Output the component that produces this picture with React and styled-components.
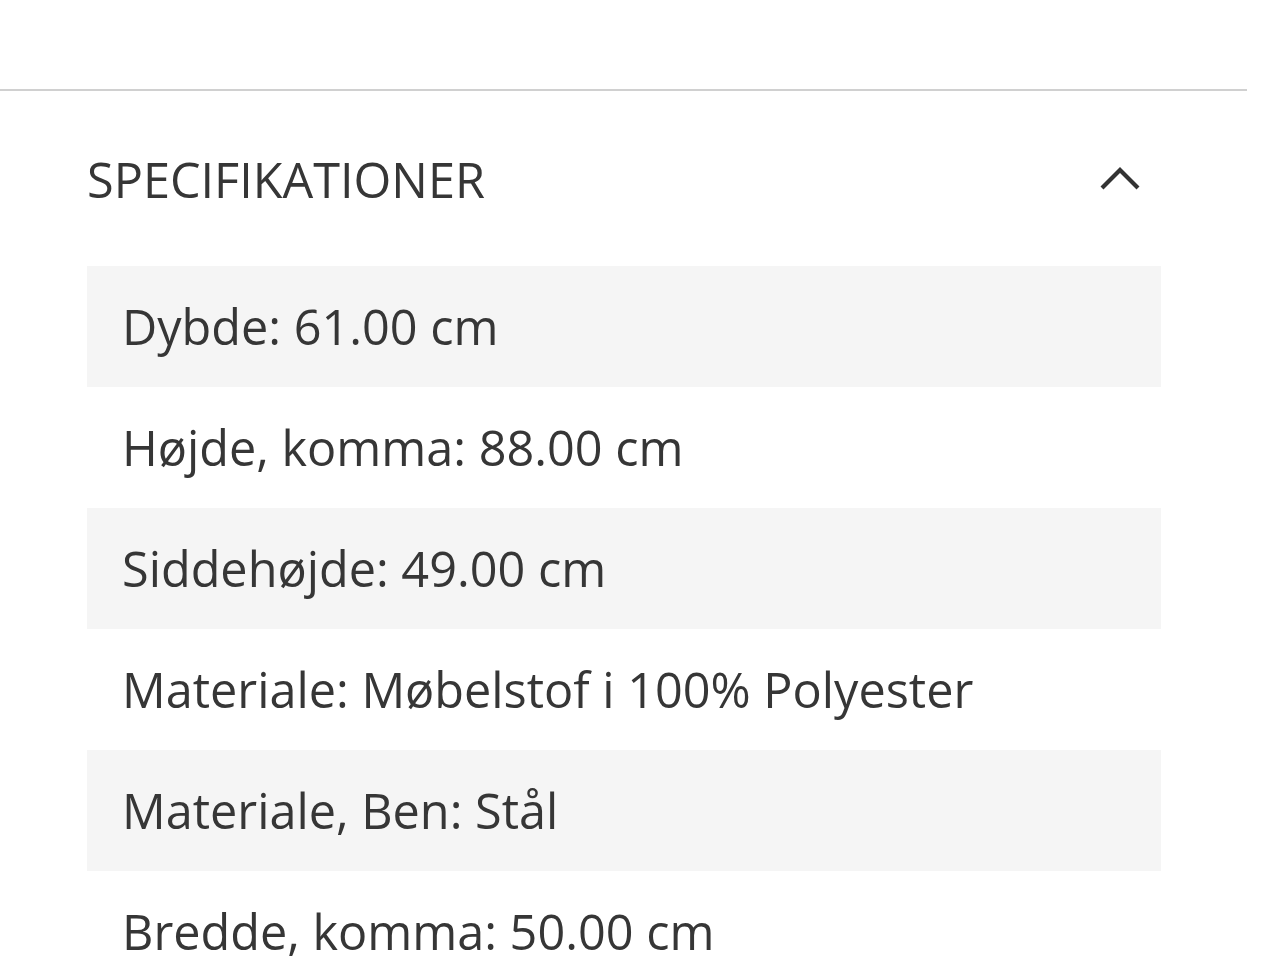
import React from 'react';
import styled, { createGlobalStyle } from 'styled-components';

const Global = createGlobalStyle`
    html, body {
        margin: 0;
        padding: 0;
        background: #ffffff;
    }
    body {
        font-family: "Open Sans", "Noto Sans", sans-serif;
        color: #333333;
    }
`;

const Page = styled.div`
    width: 1280px;
    height: 960px;
    overflow: hidden;
    padding-top: 89px;
    box-sizing: border-box;
`;

const Divider = styled.hr`
    width: 1247px;
    margin: 0;
    border: 0;
    border-top: 2px solid #d0d0d0;
`;

const Section = styled.section`
    padding-left: 87px;
    width: 1074px;
`;

const Header = styled.div`
    height: 175px;
    display: flex;
    align-items: center;
    justify-content: space-between;
`;

const Title = styled.h2`
    margin: 0;
    font-size: 48.6px;
    font-weight: 400;
    line-height: normal;
    color: #363636;
    letter-spacing: 0;
`;

const Toggle = styled.button`
    border: 0;
    background: none;
    padding: 0;
    margin-right: 20px;
    width: 42px;
    height: 28px;
    display: flex;
    align-items: center;
    justify-content: center;
    cursor: pointer;
`;

const SpecList = styled.ul`
    list-style: none;
    margin: 0;
    padding: 0;
`;

const SpecRow = styled.li`
    height: 121px;
    line-height: 121px;
    padding-left: 35px;
    font-size: 48.6px;
    color: #363636;
    background: ${p => (p.$shaded ? '#f5f5f5' : 'transparent')};
    white-space: nowrap;
`;

const specs = [
    'Dybde: 61.00 cm',
    'Højde, komma: 88.00 cm',
    'Siddehøjde: 49.00 cm',
    'Materiale: Møbelstof i 100% Polyester',
    'Materiale, Ben: Stål',
    'Bredde, komma: 50.00 cm',
];

const ChevronUp = () => (
    <svg width="42" height="28" viewBox="0 0 42 28" fill="none">
        <path d="M3 23 L21 5 L39 23" stroke="#333333" strokeWidth="4.2" strokeLinecap="butt" strokeLinejoin="miter" />
    </svg>
);

const App = () => {
    return (
        <Page>
            <Global />
            <Divider />
            <Section>
                <Header>
                    <Title>SPECIFIKATIONER</Title>
                    <Toggle aria-label="Skjul specifikationer">
                        <ChevronUp />
                    </Toggle>
                </Header>
                <SpecList>
                    {specs.map((s, i) => (
                        <SpecRow key={s} $shaded={i % 2 === 0}>{s}</SpecRow>
                    ))}
                </SpecList>
            </Section>
        </Page>
    );
};

export default App;
